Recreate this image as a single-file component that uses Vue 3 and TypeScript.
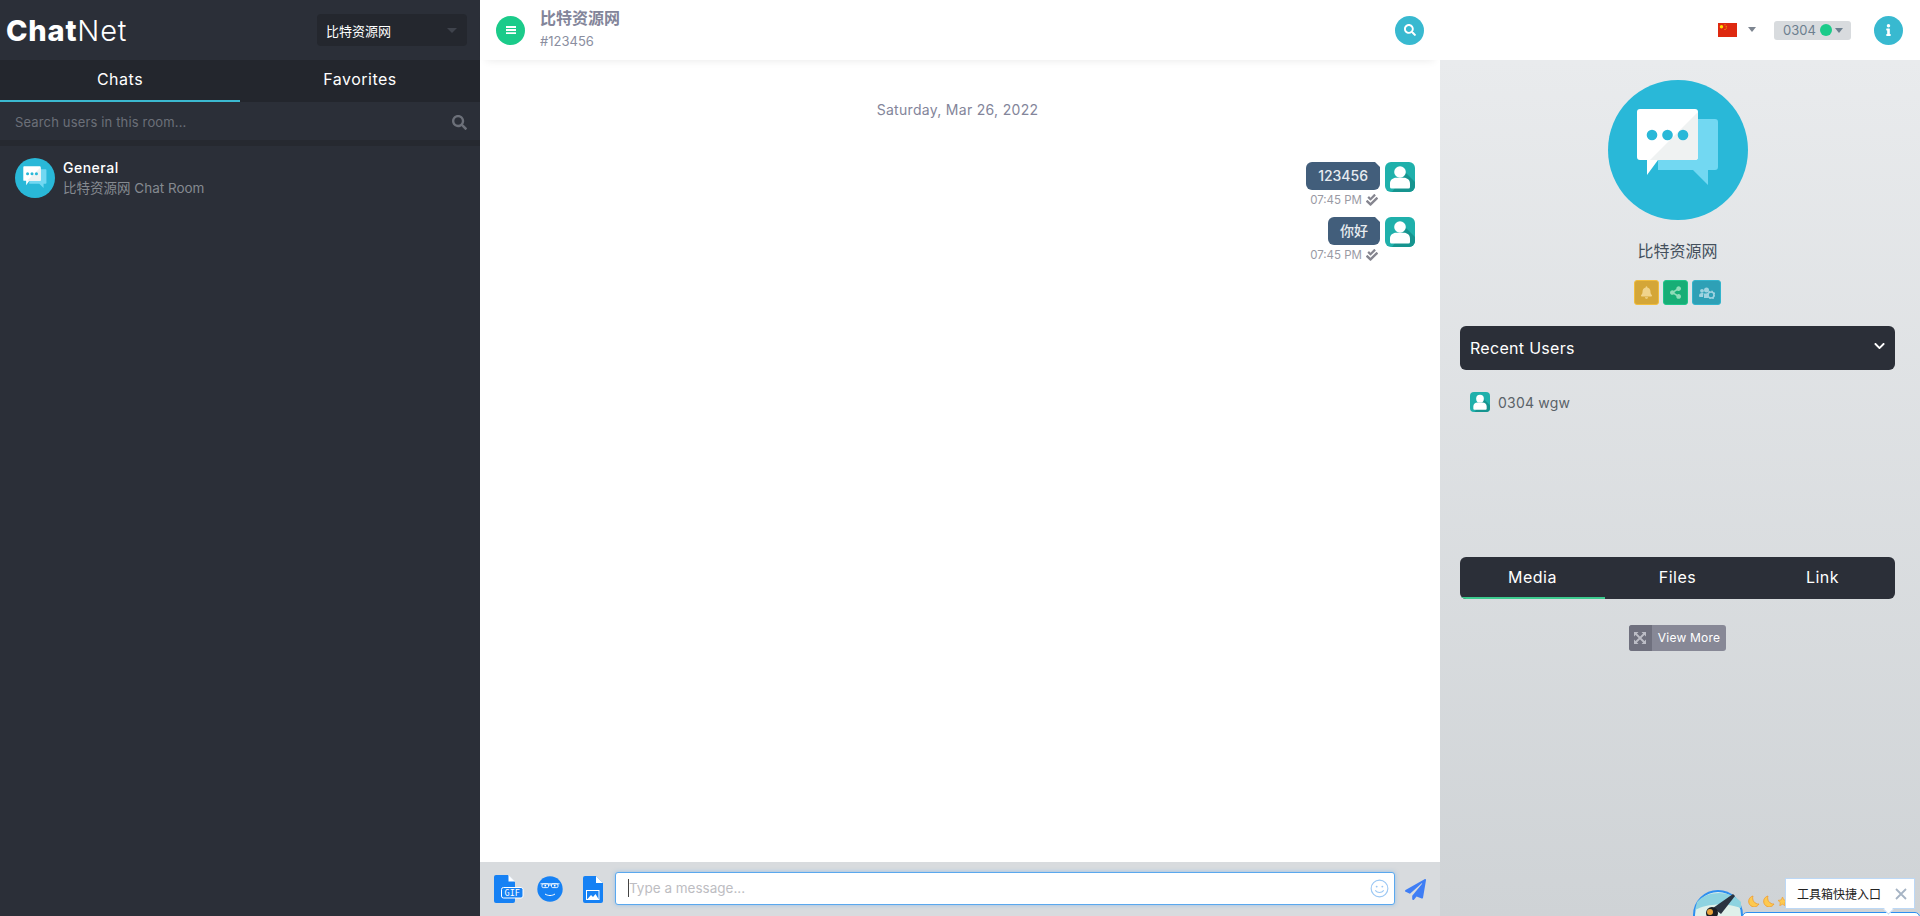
<script setup lang="ts">
interface Msg { id: number; text: string; time: string }
const messages: Msg[] = [
  { id: 1, text: '123456', time: '07:45 PM' },
  { id: 2, text: '你好', time: '07:45 PM' },
]
const tabs: string[] = ['Media', 'Files', 'Link']
const searchPath = 'M505 442.7L405.3 343c-4.5-4.5-10.6-7-17-7H372c27.6-35.3 44-79.7 44-128C416 93.1 322.9 0 208 0S0 93.1 0 208s93.1 208 208 208c48.3 0 92.7-16.4 128-44v16.3c0 6.4 2.5 12.5 7 17l99.7 99.7c9.4 9.4 24.6 9.4 33.9 0l28.3-28.3c9.4-9.4 9.4-24.6.1-34zM208 336c-70.7 0-128-57.2-128-128 0-70.7 57.2-128 128-128 70.7 0 128 57.2 128 128 0 70.7-57.2 128-128 128z'
const checkDouble = 'M505 174.8l-39.6-39.6c-9.4-9.4-24.6-9.4-33.9 0L192 374.7 80.6 263.2c-9.4-9.4-24.6-9.4-33.9 0L7 302.9c-9.4 9.4-9.4 24.6 0 34L175 505c9.4 9.4 24.6 9.4 33.9 0l296-296.2c9.4-9.5 9.4-24.7.1-34zm-324.3 106c6.2 6.3 16.4 6.3 22.6 0l208-208.2c6.2-6.3 6.2-16.4 0-22.6L366.1 4.7c-6.2-6.3-16.4-6.3-22.6 0L192 156.2l-55.4-55.5c-6.2-6.3-16.4-6.3-22.6 0L68.7 146c-6.2 6.3-6.2 16.4 0 22.6l112 112.2z'
</script>

<template>
  <div class="app">
    <aside class="left">
      <div class="brand">
        <div class="logo"><b>Chat</b>Net</div>
        <div class="room-select"><span>比特资源网</span><i class="caret dim"></i></div>
      </div>
      <div class="left-tabs">
        <div class="left-tab active">Chats</div>
        <div class="left-tab">Favorites</div>
      </div>
      <div class="search">
        <span>Search users in this room...</span>
        <svg class="search-ico" viewBox="0 0 512 512"><path :d="searchPath" fill="#6c7079" /></svg>
      </div>
      <div class="chat-item">
        <svg class="room-avatar small" viewBox="0 0 140 140">
          <circle cx="70" cy="70" r="70" fill="#29b8d8" />
          <path d="M60 39h47a3 3 0 0 1 3 3v45a3 3 0 0 1-3 3h-7v15L85 90H50V60z" fill="#72d8f2" />
          <path d="M32 29h55a3 3 0 0 1 3 3v45a3 3 0 0 1-3 3H50L39 95V80h-7a3 3 0 0 1-3-3V32a3 3 0 0 1 3-3z" fill="#fff" />
          <path d="M90 32v45a3 3 0 0 1-3 3H42z" fill="#eff2f2" />
          <circle cx="44" cy="55" r="5.300" fill="#29b8d8" /><circle cx="59.500" cy="55" r="5.300" fill="#29b8d8" /><circle cx="75" cy="55" r="5.300" fill="#29b8d8" />
        </svg>
        <div class="chat-item-text">
          <div class="chat-name">General</div>
          <div class="chat-sub">比特资源网 Chat Room</div>
        </div>
      </div>
    </aside>

    <main class="center">
      <header class="center-head">
        <button class="circle green">
          <svg viewBox="0 0 12 12" width="12" height="12"><path d="M1 2h10v1.900H1zM1 5.100h10V7H1zM1 8.200h10v1.900H1z" fill="#fff" /></svg>
        </button>
        <div class="head-title">
          <div class="room-name">比特资源网</div>
          <div class="room-id">#123456</div>
        </div>
        <button class="circle cyan push">
          <svg viewBox="0 0 512 512" width="12" height="12"><path :d="searchPath" fill="#fff" /></svg>
        </button>
      </header>

      <section class="messages">
        <div class="date">Saturday, Mar 26, 2022</div>
        <div v-for="m in messages" :key="m.id" class="msg">
          <div class="msg-body">
            <div class="bubble">{{ m.text }}</div>
            <div class="meta">
              <span>{{ m.time }}</span>
              <svg viewBox="0 0 512 512" width="12" height="12"><path :d="checkDouble" fill="#85858f" /></svg>
            </div>
          </div>
          <svg class="user-avatar" viewBox="0 0 30 30">
            <rect width="30" height="30" rx="6" fill="#1fb0ab" />
            <path d="M21 11l9 9v4a6 6 0 0 1-6 6H7z" fill="#16948f" />
            <circle cx="15" cy="10" r="5.800" fill="#fff" />
            <path d="M5 25v-3.500C5 18 8 15.800 11 15.800h8c3 0 6 2.200 6 5.700V25a1.500 1.500 0 0 1-1.500 1.500h-17A1.500 1.500 0 0 1 5 25z" fill="#fff" />
          </svg>
        </div>
      </section>

      <footer class="composer">
        <svg class="file-ico" viewBox="0 0 30 28" width="30" height="28">
          <path d="M2 0h12l7 7v19a2 2 0 0 1-2 2H2a2 2 0 0 1-2-2V2a2 2 0 0 1 2-2z" fill="#1681f4" />
          <path d="M14.500 0l6.500 6.500h-6.500z" fill="#fff" />
          <rect x="7.500" y="12.500" width="21.500" height="10.500" rx="2" fill="#1681f4" stroke="#fff" stroke-width="1" />
          <text x="18.200" y="21" font-size="8.500" fill="#fff" text-anchor="middle" class="gif-text">GIF</text>
        </svg>
        <svg class="smile-ico" viewBox="0 0 26 26" width="26" height="26">
          <circle cx="13" cy="13" r="12.700" fill="#1681f4" />
          <rect x="5" y="7.800" width="6.500" height="3.800" rx="1.200" fill="none" stroke="#fff" stroke-width=".9" />
          <rect x="14.500" y="7.800" width="6.500" height="3.800" rx="1.200" fill="none" stroke="#fff" stroke-width=".9" />
          <path d="M3.500 7.800h19M11.500 9h3" fill="none" stroke="#fff" stroke-width=".9" />
          <circle cx="8.300" cy="9.700" r=".9" fill="#fff" /><circle cx="17.700" cy="9.700" r=".9" fill="#fff" />
          <path d="M8 18c3 2 7 2 10 0" fill="none" stroke="#fff" stroke-width="1" />
        </svg>
        <svg class="image-ico" viewBox="0 0 20 27" width="20" height="27">
          <path d="M2 0h11l7 7v18a2 2 0 0 1-2 2H2a2 2 0 0 1-2-2V2a2 2 0 0 1 2-2z" fill="#1681f4" />
          <path d="M13 0l7 7h-7z" fill="#fff" />
          <rect x="3.500" y="14.500" width="12.500" height="9" fill="none" stroke="#fff" stroke-width="1" />
          <path d="M4.500 23l3.500-4 2 2 2.500-3 3 5z" fill="#fff" />
        </svg>
        <div class="input">
          <i class="cursor"></i><span class="placeholder">Type a message...</span>
          <svg class="input-smile" viewBox="0 0 20 20" width="19" height="19">
            <circle cx="10" cy="10" r="8.800" fill="none" stroke="#9cc8f4" stroke-width="1.200" />
            <circle cx="7" cy="8" r="1" fill="#9cc8f4" /><circle cx="13" cy="8" r="1" fill="#9cc8f4" />
            <path d="M5.500 12c2.500 3 6.500 3 9 0" fill="none" stroke="#9cc8f4" stroke-width="1.200" />
          </svg>
        </div>
        <svg class="send" viewBox="0 0 512 512" width="21" height="21"><path d="M476 3.200L12.500 270.600c-18.100 10.400-15.800 35.600 2.200 43.200L121 358.400l287.300-253.200c5.500-4.900 13.300 2.600 8.600 8.300L176 407v80.500c0 23.600 28.500 32.900 42.500 15.800L282 426l124.600 52.200c14.200 6 30.400-2.900 33-18.200l72-432C515 7.800 493.300-6.800 476 3.200z" fill="#3f7ef5" /></svg>
      </footer>
    </main>

    <aside class="right">
      <header class="right-head">
        <svg class="flag" viewBox="0 0 19 14" width="19" height="14">
          <rect width="19" height="14" fill="#de2910" />
          <circle cx="3.500" cy="3.800" r="1.700" fill="#ffde00" />
          <circle cx="7" cy="1.800" r=".5" fill="#ffde00" /><circle cx="8.200" cy="3.200" r=".5" fill="#ffde00" />
          <circle cx="8.200" cy="5" r=".5" fill="#ffde00" /><circle cx="7" cy="6.400" r=".5" fill="#ffde00" />
        </svg>
        <i class="caret grey flag-caret"></i>
        <div class="user-pill">0304<i class="dot"></i><i class="caret slate"></i></div>
        <button class="circle cyan info">
          <svg viewBox="0 0 192 512" width="5" height="12"><path d="M20 424.229h20V279.771H20c-11.046 0-20-8.954-20-20V212c0-11.046 8.954-20 20-20h112c11.046 0 20 8.954 20 20v212.229h20c11.046 0 20 8.954 20 20V492c0 11.046-8.954 20-20 20H20c-11.046 0-20-8.954-20-20v-47.771c0-11.046 8.954-20 20-20zM96 0C56.235 0 24 32.235 24 72s32.235 72 72 72 72-32.235 72-72S135.764 0 96 0z" fill="#fff" /></svg>
        </button>
      </header>

      <div class="panel">
        <svg class="room-avatar big" viewBox="0 0 140 140">
          <circle cx="70" cy="70" r="70" fill="#29b8d8" />
          <path d="M60 39h47a3 3 0 0 1 3 3v45a3 3 0 0 1-3 3h-7v15L85 90H50V60z" fill="#72d8f2" />
          <path d="M32 29h55a3 3 0 0 1 3 3v45a3 3 0 0 1-3 3H50L39 95V80h-7a3 3 0 0 1-3-3V32a3 3 0 0 1 3-3z" fill="#fff" />
          <path d="M90 32v45a3 3 0 0 1-3 3H42z" fill="#eff2f2" />
          <circle cx="44" cy="55" r="5.300" fill="#29b8d8" /><circle cx="59.500" cy="55" r="5.300" fill="#29b8d8" /><circle cx="75" cy="55" r="5.300" fill="#29b8d8" />
        </svg>
        <div class="panel-name">比特资源网</div>
        <div class="actions">
          <button class="act yellow">
            <svg viewBox="0 0 448 512" width="11" height="13"><path d="M224 512c35.320 0 63.970-28.650 63.970-64H160.030c0 35.350 28.650 64 63.970 64zm215.390-149.710c-19.320-20.760-55.470-51.990-55.470-154.290 0-77.700-54.480-139.900-127.940-155.160V32c0-17.670-14.320-32-31.980-32s-31.980 14.330-31.980 32v20.840C118.560 68.100 64.080 130.300 64.080 208c0 102.300-36.150 133.530-55.470 154.290-6 6.450-8.660 14.160-8.610 21.710.11 16.400 12.980 32 32.100 32h383.800c19.120 0 32-15.600 32.100-32 .05-7.550-2.610-15.270-8.610-21.710z" fill="#f0d48c" /></svg>
          </button>
          <button class="act emerald">
            <svg viewBox="0 0 448 512" width="11" height="13"><path d="M352 320c-22.608 0-43.387 7.819-59.790 20.895l-102.486-64.054a96.551 96.551 0 0 0 0-41.683l102.486-64.054C308.613 184.181 329.392 192 352 192c53.019 0 96-42.981 96-96S405.019 0 352 0s-96 42.981-96 96c0 7.158.79 14.130 2.276 20.841L155.790 180.895C139.387 167.819 118.608 160 96 160c-53.019 0-96 42.981-96 96s42.981 96 96 96c22.608 0 43.387-7.819 59.790-20.895l102.486 64.054A96.301 96.301 0 0 0 256 416c0 53.019 42.981 96 96 96s96-42.981 96-96-42.981-96-96-96z" fill="#8fdcb8" /></svg>
          </button>
          <button class="act teal">
            <svg viewBox="0 0 16 12" width="16" height="12" fill="#9fd3e0">
              <circle cx="3" cy="3.800" r="1.900" /><circle cx="7.500" cy="3" r="2.500" />
              <path d="M0 9c0-2 1-3 3-3h1.500L4 10H1a1 1 0 0 1-1-1zM5 6.500h5l-1 4.500H5z" />
              <circle cx="12" cy="8" r="3" fill="none" stroke="#9fd3e0" stroke-width="1.600" />
              <circle cx="12" cy="8" r="3.900" fill="none" stroke="#9fd3e0" stroke-width="1.200" stroke-dasharray="1.500 1.560" />
            </svg>
          </button>
        </div>

        <div class="recent-bar">
          <span>Recent Users</span>
          <svg viewBox="0 0 448 512" width="11" height="12"><path d="M207.029 381.476L12.686 187.132c-9.373-9.373-9.373-24.569 0-33.941l22.667-22.667c9.357-9.357 24.522-9.375 33.901-.04L224 284.505l154.745-154.021c9.379-9.335 24.544-9.317 33.901.04l22.667 22.667c9.373 9.373 9.373 24.569 0 33.941L240.971 381.476c-9.373 9.372-24.569 9.372-33.942 0z" fill="#fff" /></svg>
        </div>
        <div class="recent-list">
          <div class="recent-user">
            <svg class="recent-avatar" viewBox="0 0 30 30">
              <rect width="30" height="30" rx="6" fill="#1fb0ab" />
              <path d="M21 11l9 9v4a6 6 0 0 1-6 6H7z" fill="#16948f" />
              <circle cx="15" cy="10" r="5.800" fill="#fff" />
              <path d="M5 25v-3.500C5 18 8 15.800 11 15.800h8c3 0 6 2.200 6 5.700V25a1.500 1.500 0 0 1-1.500 1.500h-17A1.500 1.500 0 0 1 5 25z" fill="#fff" />
            </svg>
            <span>0304 wgw</span>
          </div>
        </div>

        <div class="media-tabs">
          <div v-for="(t, i) in tabs" :key="t" class="media-tab" :class="{ active: i === 0 }">{{ t }}</div>
        </div>
        <button class="view-more">
          <span class="vm-ico">
            <svg viewBox="0 0 12 12" width="12" height="12"><path d="M1 1l10 10M11 1L1 11" stroke="#bcbdc6" stroke-width="1.800" /><path d="M0 0h4.500L0 4.500zM12 0v4.500L7.500 0zM0 12V7.500L4.500 12zM12 12H7.500L12 7.500z" fill="#bcbdc6" /></svg>
          </span>
          <span class="vm-text">View More</span>
        </button>
      </div>
    </aside>

    <div class="widget">
      <svg class="mascot" viewBox="0 0 50 50" width="50" height="50">
        <circle cx="25" cy="25" r="24" fill="#dff0ea" stroke="#2e8ff0" stroke-width="2" />
        <path d="M2 20c10-6 30-8 46-2v-6C38 0 14 0 4 12z" fill="#8ed3e0" />
        <path d="M20 18l20-14 2 2-14 18z" fill="#2b3340" />
        <circle cx="19" cy="23" r="6" fill="#1b1e24" /><circle cx="17" cy="22" r="3" fill="#e9a23a" />
        <path d="M12 28l16-2-4 14H12z" fill="#c8402e" />
      </svg>
      <div class="moons">
        <svg v-for="n in 2" :key="n" viewBox="0 0 12 12" width="12" height="12"><path d="M5 1a5.500 5.500 0 1 0 6 8A6 6 0 0 1 5 1z" fill="#fdc94f" stroke="#f09a2c" stroke-width=".8" /></svg>
        <svg viewBox="0 0 12 12" width="9" height="9"><path d="M6 0l1.800 3.900L12 4.500 9 7.400l.7 4.300L6 9.700 2.300 11.700 3 7.400 0 4.500l4.200-.6z" fill="#fdc94f" stroke="#f09a2c" stroke-width=".8" /></svg>
      </div>
      <div class="tooltip">
        <span>工具箱快捷入口</span>
        <svg viewBox="0 0 12 12" width="12" height="12"><path d="M1 1l10 10M11 1L1 11" stroke="#a6b4c4" stroke-width="1.800" /></svg>
      </div>
      <div class="widget-box"></div>
    </div>
  </div>
</template>

<style>
html, body { margin: 0; height: 100%; overflow: hidden; }
</style>

<style scoped>
.app {
  display: flex;
  height: 916px;
  position: relative;
  overflow: hidden;
  font-family: Inter, "Noto Sans CJK SC", sans-serif;
}
button { border: 0; padding: 0; cursor: pointer; display: flex; align-items: center; justify-content: center; }
.caret { display: block; width: 0; height: 0; border-left: 5px solid transparent; border-right: 5px solid transparent; border-top: 5px solid #666; }
.caret.dim { border-top-color: #3f434c; margin-left: auto; }
.caret.grey { border-top-color: #7d8590; }
.caret.slate { border-top-color: #6c7f8f; }

/* left */
.left { width: 480px; flex: none; background: #2b2f38; color: #fff; display: flex; flex-direction: column; }
.brand { height: 60px; display: flex; align-items: center; justify-content: space-between; padding: 0 13px 0 6px; box-sizing: border-box; }
.logo { font-size: 29px; font-weight: 300; letter-spacing: .8px; }
.logo b { font-weight: 800; }
.room-select { width: 150px; height: 32px; box-sizing: border-box; background: #24272e; border-radius: 4px; display: flex; align-items: center; padding: 0 10px 0 9px; font-size: 13px; }
.left-tabs { display: flex; height: 42px; background: #23262d; }
.left-tab { width: 240px; display: flex; align-items: center; justify-content: center; font-size: 16px; font-weight: 400; letter-spacing: .5px; box-sizing: border-box; padding-bottom: 4px; }
.left-tab.active { border-bottom: 2px solid #3bb9d0; padding-bottom: 2px; }
.search { height: 36px; margin-top: 2px; display: flex; align-items: center; justify-content: space-between; padding: 0 13px 0 15px; color: #6c7079; font-size: 13px; letter-spacing: .15px; border-bottom: 6px solid #262930; }
.search-ico { width: 15px; height: 15px; }
.chat-item { display: flex; align-items: center; gap: 8px; padding: 12px 15px; }
.room-avatar { display: block; flex: none; }
.room-avatar.small { width: 40px; height: 40px; }
.chat-item-text { line-height: 20px; font-size: 14px; }
.chat-name { font-weight: 500; letter-spacing: .5px; }
.chat-sub { color: #858a90; font-size: 13.500px; }

/* center */
.center { flex: 1; min-width: 0; display: flex; flex-direction: column; background: #fff; }
.center-head { height: 60px; flex: none; display: flex; align-items: center; padding: 0 16px; box-sizing: border-box; box-shadow: 0 7px 8px -6px rgba(0, 0, 0, .08); position: relative; }
.circle { width: 29px; height: 29px; border-radius: 50%; flex: none; }
.green { background: #1bcb8a; }
.cyan { background: #38b9d0; }
.push { margin-left: auto; }
.head-title { margin-left: 15px; align-self: flex-start; padding-top: 7px; }
.room-name { font-size: 16px; font-weight: 700; color: #83859a; line-height: 22px; }
.room-id { font-size: 13px; color: #8a8ea0; line-height: 18px; margin-top: 3px; }
.messages { flex: 1; display: flex; flex-direction: column; align-items: stretch; padding-right: 25px; }
.date { text-align: center; font-size: 14px; color: #83859a; line-height: 20px; margin: 40px 0 42px 20px; letter-spacing: .3px; height: 20px; }
.msg { display: flex; justify-content: flex-end; gap: 5px; height: 55px; }
.msg-body { display: flex; flex-direction: column; align-items: flex-end; }
.bubble { background: #425e7b; color: #e8ecf0; font-size: 14px; font-weight: 500; line-height: 28px; padding: 0 12px; border-radius: 6px 0 6px 6px; position: relative; }
.bubble::after { content: ""; position: absolute; top: 0; right: 0; border-top: 5px solid #fff; border-left: 5px solid transparent; }
.meta { display: flex; align-items: center; gap: 4px; font-size: 11.500px; color: #9a9aa4; height: 20px; align-self: flex-end; padding-right: 2px; white-space: nowrap; }
.user-avatar { width: 30px; height: 30px; display: block; flex: none; }
.composer { height: 54px; flex: none; background: #d8dbde; display: flex; align-items: center; padding-left: 14px; box-sizing: border-box; }
.gif-text { font-family: "DejaVu Sans Mono", monospace; }
.smile-ico { margin-left: 13px; }
.image-ico { margin-left: 20px; }
.input { width: 780px; height: 33px; box-sizing: border-box; margin-left: 12px; margin-top: -2px; background: #fff; border: 1px solid #5aa8ee; border-radius: 3px; box-shadow: 0 0 4px rgba(90, 168, 238, .5); display: flex; align-items: center; padding: 0 5px 0 12px; font-size: 13.500px; color: #bdbdc2; }
.cursor { width: 1px; height: 18px; background: #444; flex: none; }
.input-smile { margin-left: auto; }
.send { margin-left: 10px; }

/* right */
.right { width: 480px; flex: none; display: flex; flex-direction: column; position: relative; z-index: 1; }
.right-head { height: 60px; flex: none; background: #fff; display: flex; align-items: center; padding-left: 278px; box-sizing: border-box; }
.flag { display: block; margin-bottom: 0; }
.flag-caret { margin-left: 11px; margin-top: -2px; border-left-width: 4px; border-right-width: 4px; }
.user-pill { margin-left: 18px; width: 77px; height: 19px; box-sizing: border-box; background: #d8dbde; border-radius: 3px; display: flex; align-items: center; padding-left: 9px; font-size: 13px; color: #6c7f8f; }
.dot { width: 12px; height: 12px; border-radius: 50%; background: #1bcb8a; margin: 0 3px 0 4px; flex: none; }
.user-pill .caret { border-left-width: 4px; border-right-width: 4px; }
.info { margin-left: 23px; }
.panel { flex: 1; display: flex; flex-direction: column; align-items: center; padding: 20px 25px 0 20px; background: linear-gradient(180deg, #e9ebed 0%, #cfd3d6 100%); }
.room-avatar.big { width: 140px; height: 140px; }
.panel-name { margin-top: 19px; line-height: 24px; font-size: 16px; color: #44505c; }
.actions { display: flex; gap: 4px; margin-top: 17px; }
.act { height: 25px; width: 25px; border-radius: 3px; }
.yellow { background: #d4a637; border: 1px solid #f1bd3c; box-sizing: border-box; }
.emerald { background: #17ae76; box-sizing: border-box; border: 1px solid #1ec68a; }
.teal { background: #2ea0b6; width: 29px; box-sizing: border-box; border: 1px solid #33b4cc; }
.recent-bar { align-self: stretch; height: 44px; margin-top: 21px; box-sizing: border-box; background: #2b2f38; color: #fff; border-radius: 6px; display: flex; align-items: center; justify-content: space-between; padding: 0 10px; font-size: 16px; font-weight: 400; letter-spacing: .3px; }
.recent-bar svg { margin-top: -4px; }
.recent-list { align-self: stretch; height: 187px; padding: 22px 10px 0; box-sizing: border-box; }
.recent-user { display: flex; align-items: center; gap: 8px; font-size: 14px; color: #5a6268; letter-spacing: .2px; }
.recent-avatar { width: 20px; height: 20px; display: block; }
.media-tabs { align-self: stretch; height: 42px; display: flex; background: #2b2f38; border-radius: 6px; overflow: hidden; }
.media-tab { flex: 1; display: flex; align-items: center; justify-content: center; color: #fff; font-size: 16px; font-weight: 400; letter-spacing: .5px; box-sizing: border-box; padding-bottom: 2px; }
.media-tab.active { border-bottom: 2px solid #3dcb8f; padding-bottom: 0; }
.view-more { margin-top: 26px; height: 26px; display: flex; background: #878896; color: #fff; border-radius: 3px; overflow: hidden; align-items: stretch; }
.vm-ico { width: 23px; background: #6f707e; display: flex; align-items: center; justify-content: center; }
.vm-text { font-size: 12px; font-weight: 400; padding: 0 6px 0 6px; line-height: 26px; letter-spacing: .2px; font-family: Inter, sans-serif; }

/* floating toolbox widget */
.widget { position: absolute; left: 0; top: 0; width: 0; height: 0; z-index: 2; }
.mascot { position: absolute; left: 1693px; top: 890px; }
.moons { position: absolute; left: 1748px; top: 895px; display: flex; align-items: center; gap: 3px; }
.widget-box { position: absolute; left: 1742px; top: 912px; width: 178px; height: 10px; background: #fff; border: 1px solid #2e8ff0; border-radius: 8px; box-sizing: border-box; }
.tooltip { position: absolute; left: 1785px; top: 878px; width: 130px; height: 31px; box-sizing: border-box; background: #fff; border: 1px solid #bcd8f6; z-index: 1; display: flex; align-items: center; justify-content: space-between; padding: 0 7px 0 11px; font-size: 12px; color: #222; }
.tooltip::after { content: ""; position: absolute; left: 98px; bottom: -6px; width: 8px; height: 8px; background: #fff; border-right: 1px solid #bcd8f6; border-bottom: 1px solid #bcd8f6; transform: rotate(45deg) scale(.8); }
</style>
